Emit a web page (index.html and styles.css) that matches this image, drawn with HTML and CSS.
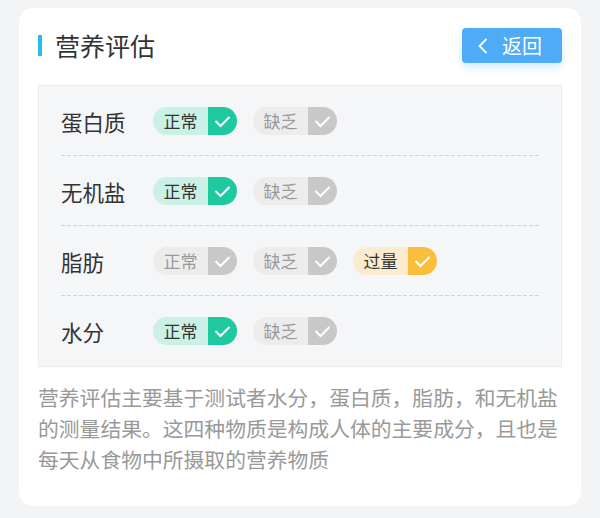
FILE: index.html
```html
<!DOCTYPE html>
<html lang="zh-CN">
<head>
  <meta charset="UTF-8" />
  <meta name="viewport" content="width=device-width, initial-scale=1.0"/>
  <title>营养评估</title>
  <link rel="stylesheet" href="styles.css">
</head>
<body>
  <div class="card">
    <div class="card-head">
      <h2 class="title">营养评估</h2>
      <button class="back-btn">
        <svg width="10" height="16" viewBox="0 0 10 16"><polyline points="8.5,1 1.5,8 8.5,15" fill="none" stroke="#fff" stroke-width="1.8"/></svg>
        <span>返回</span>
      </button>
    </div>

    <div class="panel">
      <div class="row">
        <span class="label">蛋白质</span>
        <span class="tag tag-ok"><span class="tag-text">正常</span><span class="tag-check"><svg width="29" height="28" viewBox="0 0 29 28"><polyline points="7.5,14 12.5,19 21.5,10" fill="none" stroke="#fff" stroke-width="2"/></svg></span></span>
        <span class="tag tag-off"><span class="tag-text">缺乏</span><span class="tag-check"><svg width="29" height="28" viewBox="0 0 29 28"><polyline points="7.5,14 12.5,19 21.5,10" fill="none" stroke="#fff" stroke-width="2"/></svg></span></span>
      </div>
      <div class="row">
        <span class="label">无机盐</span>
        <span class="tag tag-ok"><span class="tag-text">正常</span><span class="tag-check"><svg width="29" height="28" viewBox="0 0 29 28"><polyline points="7.5,14 12.5,19 21.5,10" fill="none" stroke="#fff" stroke-width="2"/></svg></span></span>
        <span class="tag tag-off"><span class="tag-text">缺乏</span><span class="tag-check"><svg width="29" height="28" viewBox="0 0 29 28"><polyline points="7.5,14 12.5,19 21.5,10" fill="none" stroke="#fff" stroke-width="2"/></svg></span></span>
      </div>
      <div class="row">
        <span class="label">脂肪</span>
        <span class="tag tag-off"><span class="tag-text">正常</span><span class="tag-check"><svg width="29" height="28" viewBox="0 0 29 28"><polyline points="7.5,14 12.5,19 21.5,10" fill="none" stroke="#fff" stroke-width="2"/></svg></span></span>
        <span class="tag tag-off"><span class="tag-text">缺乏</span><span class="tag-check"><svg width="29" height="28" viewBox="0 0 29 28"><polyline points="7.5,14 12.5,19 21.5,10" fill="none" stroke="#fff" stroke-width="2"/></svg></span></span>
        <span class="tag tag-over"><span class="tag-text">过量</span><span class="tag-check"><svg width="29" height="28" viewBox="0 0 29 28"><polyline points="7.5,14 12.5,19 21.5,10" fill="none" stroke="#fff" stroke-width="2"/></svg></span></span>
      </div>
      <div class="row">
        <span class="label">水分</span>
        <span class="tag tag-ok"><span class="tag-text">正常</span><span class="tag-check"><svg width="29" height="28" viewBox="0 0 29 28"><polyline points="7.5,14 12.5,19 21.5,10" fill="none" stroke="#fff" stroke-width="2"/></svg></span></span>
        <span class="tag tag-off"><span class="tag-text">缺乏</span><span class="tag-check"><svg width="29" height="28" viewBox="0 0 29 28"><polyline points="7.5,14 12.5,19 21.5,10" fill="none" stroke="#fff" stroke-width="2"/></svg></span></span>
      </div>
    </div>

    <p class="desc">营养评估主要基于测试者水分，蛋白质，脂肪，和无机盐的测量结果。这四种物质是构成人体的主要成分，且也是每天从食物中所摄取的营养物质</p>
  </div>
</body>
</html>
```

FILE: styles.css
```css
body {
  font-family: "Noto Sans CJK SC", "Noto Sans", sans-serif;
  margin: 0;
  padding: 8px 19px 0;
  background-color: #f3f4f6;
  color: #333;
}

.card {
  background-color: #fff;
  border-radius: 14px;
  padding: 20px 19px 31px;
}

.card-head {
  display: flex;
  align-items: center;
  justify-content: space-between;
  margin-bottom: 22px;
}

.title {
  margin: 0;
  font-size: 25px;
  font-weight: 400;
  line-height: 35px;
  display: flex;
  align-items: center;
}

.title::before {
  content: "";
  width: 4px;
  height: 21px;
  background-color: #27bcf0;
  margin-right: 13px;
}

.back-btn {
  display: flex;
  align-items: center;
  width: 100px;
  height: 35px;
  padding: 0 0 0 16px;
  border: none;
  border-radius: 4px;
  background-color: #4eabf7;
  box-shadow: 0 4px 8px rgba(78, 171, 247, 0.25);
  color: #fff;
  font-family: inherit;
  font-size: 20px;
  cursor: pointer;
}

.back-btn span {
  margin-left: 14px;
  line-height: 1;
}

.panel {
  background-color: #f5f6f8;
  border: 1px solid #ebebeb;
}

.row {
  display: flex;
  align-items: center;
  height: 70px;
  margin: 0 20px 0 22px;
}

.row:not(:last-child) {
  background: linear-gradient(to right, #d2d2d2 4px, transparent 4px) left bottom / 6px 1px repeat-x;
}

.label {
  width: 92px;
  font-size: 21.5px;
}

.tag {
  display: flex;
  height: 28px;
  margin-right: 16px;
  border-radius: 14px;
  overflow: hidden;
}

.tag-text {
  width: 55px;
  text-align: center;
  font-size: 17px;
  line-height: 28px;
}

.tag-check {
  width: 29px;
  height: 28px;
}

.tag-check svg {
  display: block;
}

.tag-ok .tag-text {
  background-color: #cbf0e6;
}

.tag-ok .tag-check {
  background-color: #1fc99f;
}

.tag-off .tag-text {
  background-color: #ececec;
  color: #999;
}

.tag-off .tag-check {
  background-color: #c8c8c8;
}

.tag-over .tag-text {
  background-color: #fbecd0;
}

.tag-over .tag-check {
  background-color: #fbbd3c;
}

.desc {
  margin: 15px 0 0;
  font-size: 20.8px;
  line-height: 31px;
  color: #999;
}
```
